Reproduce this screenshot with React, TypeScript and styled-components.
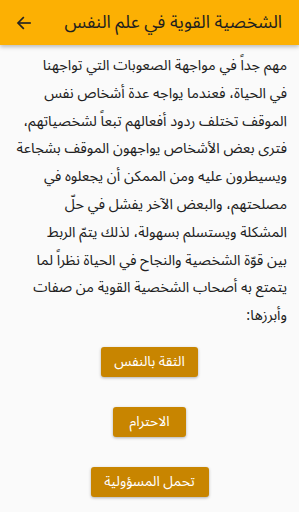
import React from "react";
import styled, { createGlobalStyle } from "styled-components";

const Global = createGlobalStyle`
  html, body { margin: 0; padding: 0; background: #fafafa; }
  body { font-family: "Noto Sans Arabic", "Noto Sans Arabic UI", "DejaVu Sans", sans-serif; }
`;

const Page = styled.div`
  width: 299px;
  height: 512px;
  overflow: hidden;
  background: #fafafa;
  display: flex;
  flex-direction: column;
`;

const AppBar = styled.header`
  height: 45px;
  flex: none;
  background: #fcb003;
  display: flex;
  align-items: center;
  justify-content: space-between;
  padding: 0 17px 0 15px;
  box-shadow: 0 2px 4px rgba(0, 0, 0, 0.25);
  position: relative;
  z-index: 1;
`;

const Title = styled.h1`
  margin: 0;
  font-size: 17.8px;
  font-weight: normal;
  color: #1f1f1f;
  direction: rtl;
  white-space: nowrap;
`;

const BackButton = styled.button`
  border: none;
  background: transparent;
  padding: 0;
  display: flex;
  color: #222;
`;

const Content = styled.main`
  flex: 1;
  padding: 7px 12px 0 12px;
  display: flex;
  flex-direction: column;
  align-items: center;
`;

const Paragraph = styled.p`
  margin: 0;
  width: 100%;
  direction: rtl;
  text-align: right;
  font-size: 14.5px;
  line-height: 27.8px;
  color: #202020;
`;

const Line = styled.span`
  display: block;
  white-space: nowrap;
`;

const Buttons = styled.div`
  margin-top: 17px;
  display: flex;
  flex-direction: column;
  align-items: center;
  gap: 30px;
`;

const ActionButton = styled.button<{ $w: number }>`
  width: ${(p) => p.$w}px;
  height: 30px;
  border: none;
  border-radius: 3px;
  background: #c88500;
  color: #fff;
  font-family: inherit;
  font-size: 14px;
  direction: rtl;
  box-shadow: 0 1px 3px rgba(0, 0, 0, 0.3);
  padding: 0;
  white-space: nowrap;
`;

const lines = [
  "مهم جداً في مواجهة الصعوبات التي تواجهنا",
  "في الحياة، فعندما يواجه عدة أشخاص نفس",
  "الموقف تختلف ردود أفعالهم تبعاً لشخصياتهم،",
  "فترى بعض الأشخاص يواجهون الموقف بشجاعة",
  "ويسيطرون عليه ومن الممكن أن يجعلوه في",
  "مصلحتهم، والبعض الآخر يفشل في حلّ",
  "المشكلة ويستسلم بسهولة، لذلك يتمّ الربط",
  "بين قوّة الشخصية والنجاح في الحياة نظراً لما",
  "يتمتع به أصحاب الشخصية القوية من صفات",
  "وأبرزها:",
];

export default function App() {
  return (
    <Page>
      <Global />
      <AppBar>
        <BackButton aria-label="back">
          <svg width="18" height="18" viewBox="0 0 24 24" fill="none" stroke="#222" strokeWidth="2.2" strokeLinecap="square">
            <path d="M20 12H5" />
            <path d="M11 5l-7 7 7 7" />
          </svg>
        </BackButton>
        <Title>الشخصية القوية في علم النفس</Title>
      </AppBar>
      <Content>
        <Paragraph>
          {lines.map((l, i) => (
            <Line key={i}>{l}</Line>
          ))}
        </Paragraph>
        <Buttons>
          <ActionButton $w={97}>الثقة بالنفس</ActionButton>
          <ActionButton $w={73}>الاحترام</ActionButton>
          <ActionButton $w={118}>تحمل المسؤولية</ActionButton>
        </Buttons>
      </Content>
    </Page>
  );
}
